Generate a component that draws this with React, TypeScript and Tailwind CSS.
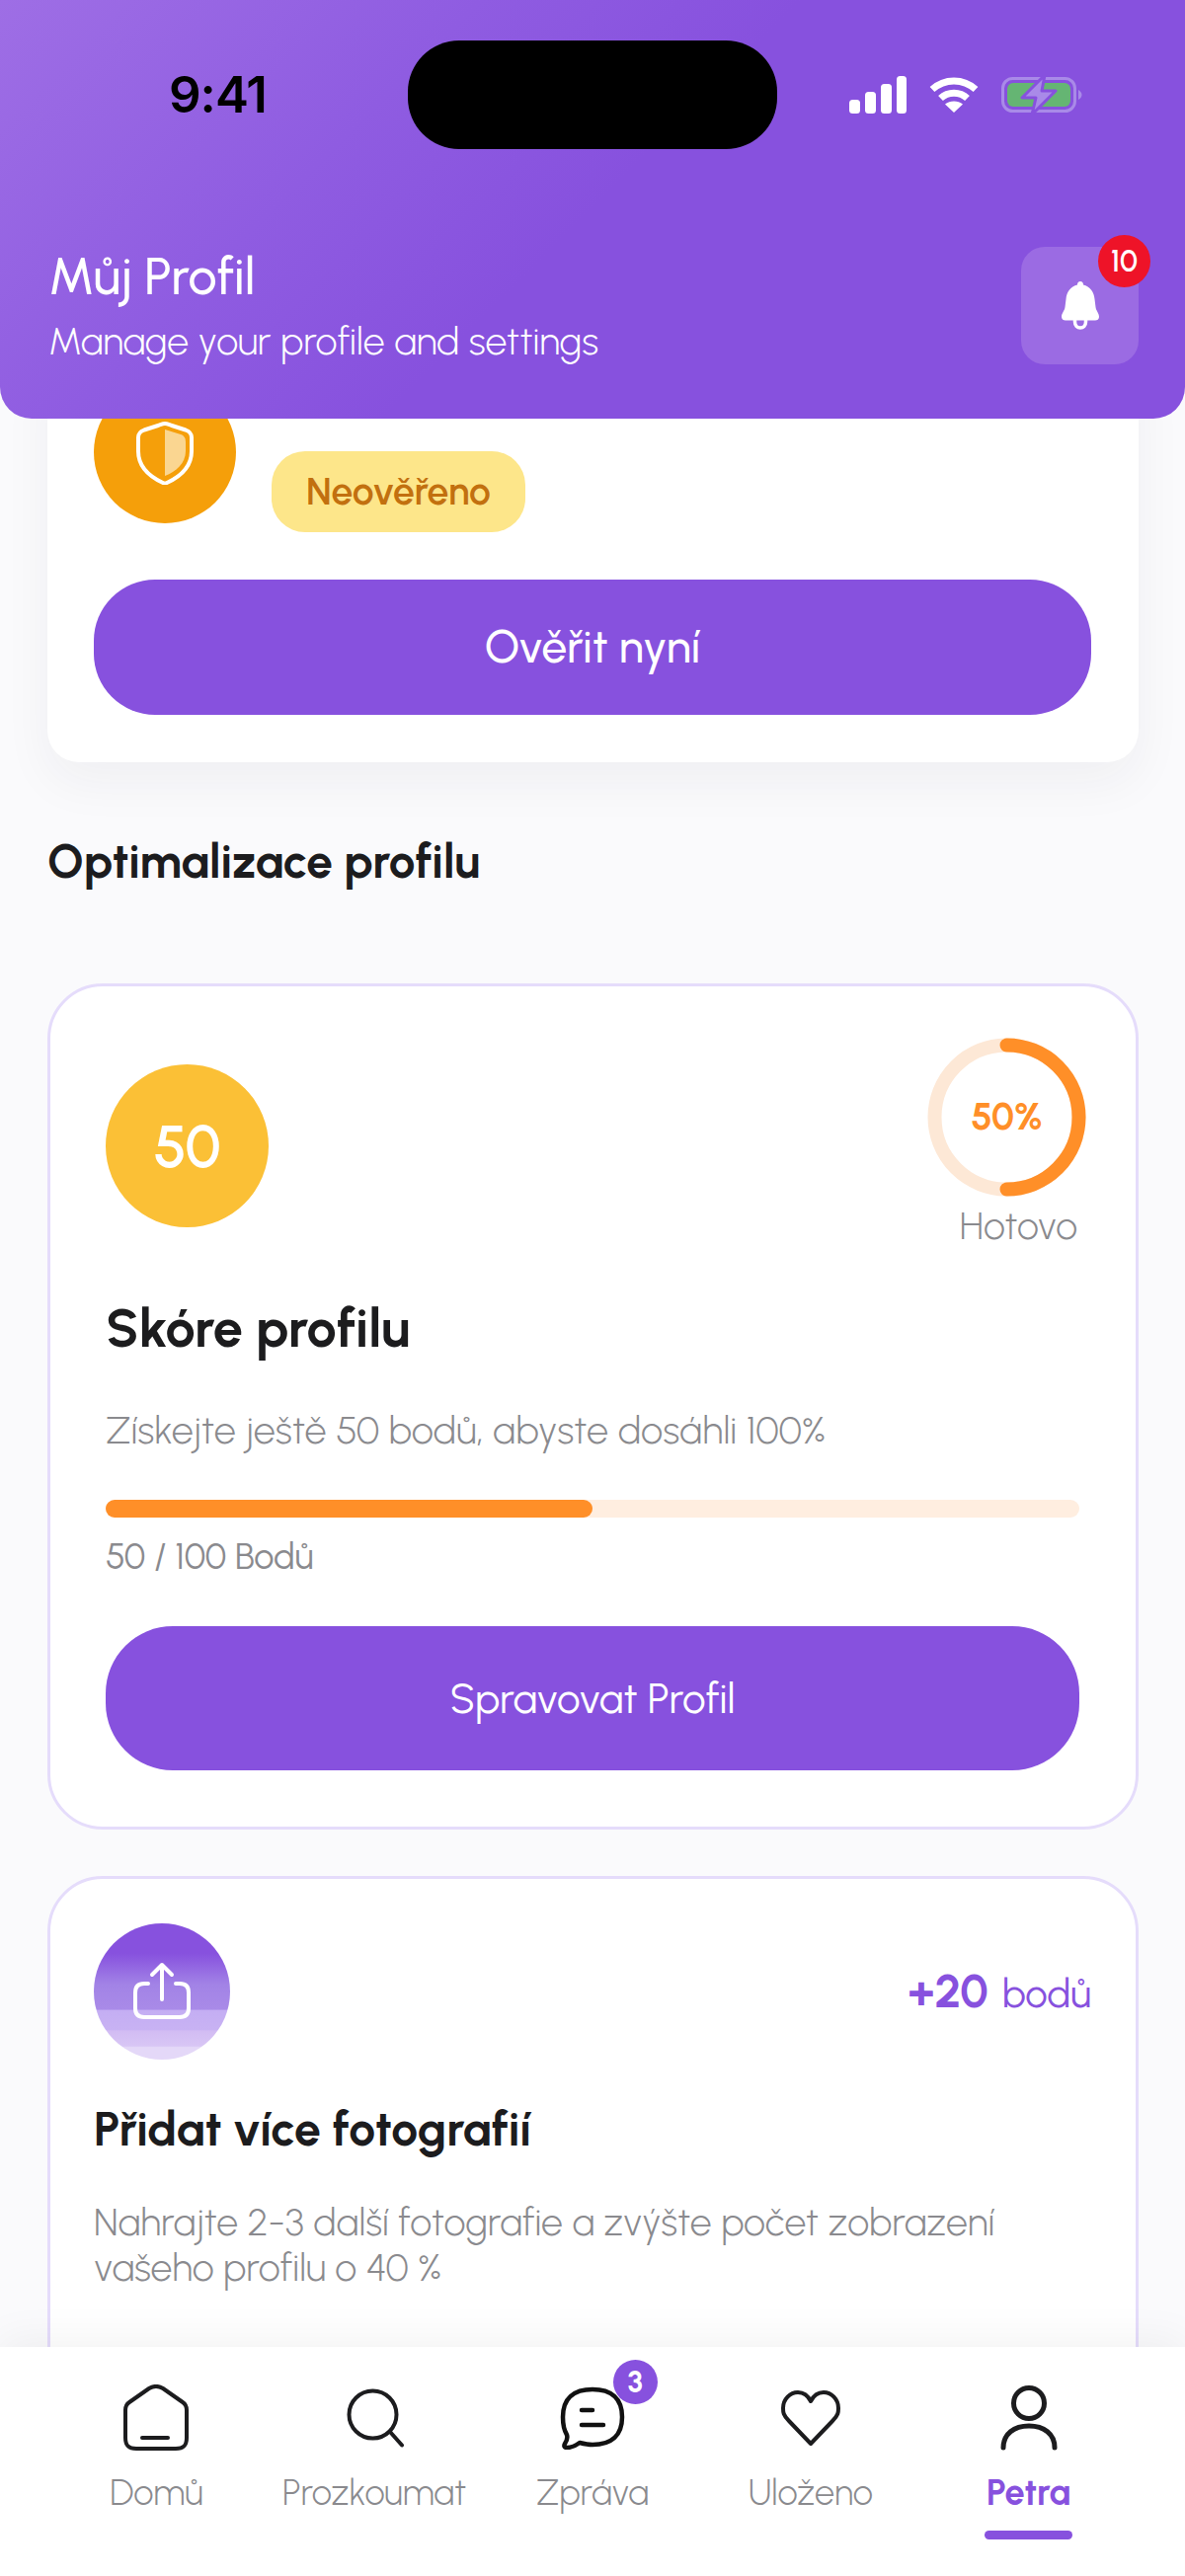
import React from "react";

function Signal() {
  return (
    <svg width="58" height="38" viewBox="0 0 58 38" fill="#fff">
      <rect x="0" y="24" width="11" height="14" rx="3.5" />
      <rect x="16" y="16" width="11" height="22" rx="3.5" />
      <rect x="32" y="8" width="11" height="30" rx="3.5" />
      <rect x="48" y="0" width="10" height="38" rx="3.5" />
    </svg>
  );
}
function Wifi() {
  return (
    <svg width="50" height="38" viewBox="0 0 50 38" fill="none">
      <path d="M3 13.5C15.5 2 34.5 2 47 13.5" stroke="#fff" strokeWidth="7" />
      <path d="M11.5 22.5C19 15.5 31 15.5 38.5 22.5" stroke="#fff" strokeWidth="7" />
      <path d="M25 37L16 28.5C21 24.5 29 24.5 34 28.5Z" fill="#fff" />
    </svg>
  );
}
function Battery() {
  return (
    <svg width="82" height="40" viewBox="0 0 82 40" fill="none">
      <rect x="1.5" y="3.5" width="73" height="33" rx="10" stroke="#a98ae8" strokeWidth="3" />
      <rect x="6" y="8" width="64" height="24" rx="6" fill="#65b573" />
      <path d="M78 15C80 16 81.500 18 81.500 20C81.500 22 80 24 78 25Z" fill="#a98ae8" />
      <path d="M44 0L21 23H35L31 40L55 16H41Z" fill="#a98ae8" stroke="#8751de" strokeWidth="3" strokeLinejoin="round" />
    </svg>
  );
}
function Bell() {
  return (
    <svg width="38" height="49" viewBox="0 0 38 49">
      <path d="M19 0C21 0 22 1.500 22 3.500C29 5 33 11 33.500 18L34.500 26C35 30 38 32 38 36C38 38.500 36 39.500 34 39.500H4C2 39.500 0 38.500 0 36C0 32 3 30 3.500 26L4.500 18C5 11 9 5 16 3.500C16 1.500 17 0 19 0Z" fill="#fff" />
      <path d="M13.500 38V41C13.500 45 16 47 19 47C22 47 24.500 45 24.500 41V38" fill="none" stroke="#fff" strokeWidth="3.500" />
    </svg>
  );
}
function Shield() {
  return (
    <svg width="58" height="64" viewBox="0 0 58 64" fill="none">
      <path d="M29 8L45 13C49 14.500 50 17 50 22V30C50 42 40 51 29 55Z" fill="#fad691" />
      <path d="M29 2C31 2 33 3 36 4L50 8.500C54 10 56 12 56 16V30C56 46 44 56 31 62Q29 63 27 62C14 56 2 46 2 30V16C2 12 4 10 8 8.500L22 4C25 3 27 2 29 2Z" stroke="#fff" strokeWidth="4" strokeLinejoin="round" />
    </svg>
  );
}
function Ring() {
  return (
    <svg width="161" height="161" viewBox="0 0 161 161" fill="none" className="block">
      <circle cx="80.500" cy="80.500" r="73" stroke="#fde8d6" strokeWidth="14" />
      <path d="M80.500 7.500A73 73 0 0 1 80.500 153.500" stroke="#ff8f28" strokeWidth="14" strokeLinecap="round" />
    </svg>
  );
}
function Upload() {
  return (
    <svg width="58" height="60" viewBox="0 0 58 60" fill="none" stroke="#fff" strokeWidth="4" strokeLinecap="round" strokeLinejoin="round">
      <path d="M29 38V3M19 13L29 3L39 13" />
      <path d="M15 22H11C5 22 2 25 2 31V47C2 53 5 56 11 56H47C53 56 56 53 56 47V31C56 25 53 22 47 22H43" />
    </svg>
  );
}
function HomeIcon() {
  return (
    <svg width="68" height="68" viewBox="0 0 68 68" fill="none" stroke="#1c1c1e" strokeWidth="4" strokeLinecap="round" strokeLinejoin="round">
      <path d="M3 26C3 22 4 20 7 18L27 4C32 1 36 1 41 4L61 18C64 20 65 22 65 26V54C65 62 62 65 54 65H14C6 65 3 62 3 54Z" />
      <path d="M20 54H46" />
    </svg>
  );
}
function SearchIcon() {
  return (
    <svg width="60" height="60" viewBox="0 0 60 60" fill="none" stroke="#1c1c1e" strokeWidth="4" strokeLinecap="round">
      <circle cx="28.500" cy="26.500" r="24" />
      <path d="M46 44L58 57.500" />
    </svg>
  );
}
function ChatIcon() {
  return (
    <svg width="66" height="64" viewBox="0 0 66 64" fill="none" stroke="#111" strokeWidth="4.500" strokeLinecap="round" strokeLinejoin="round">
      <path d="M33 3C52 3 63 12 63 31C63 50 52 59 33 59C28 59 24 58 20 57C16 60 12 62 7 62C4 62 4 60 5 58C7 55 8 52 7 49C4 44 3 38 3 31C3 12 14 3 33 3Z" />
      <path d="M22 24H33M22 39H44" />
    </svg>
  );
}
function HeartIcon() {
  return (
    <svg width="60" height="56" viewBox="0 0 60 56" fill="none" stroke="#1c1c1e" strokeWidth="4" strokeLinejoin="round">
      <path d="M30 54L8 31C2 25 2 22 2 18C2 9 9 2 17 2C22 2 27 5 30 11C33 5 38 2 43 2C51 2 58 9 58 18C58 22 58 25 52 31Z" />
    </svg>
  );
}
function UserIcon() {
  return (
    <svg width="58" height="68" viewBox="0 0 58 68" fill="none" stroke="#1c1c1e" strokeWidth="5" strokeLinecap="round">
      <circle cx="29" cy="19" r="15.500" />
      <path d="M3 64C3 50 14 42 29 42C44 42 55 50 55 64" />
    </svg>
  );
}

function NavItem({ label, active, icon, badge }: { label: string; active?: boolean; icon: React.ReactNode; badge?: string }) {
  return (
    <div className="relative flex flex-col items-center">
      <div className="flex h-[68px] items-center justify-center">{icon}</div>
      {badge && (
        <span className="absolute left-[131px] top-[-25px] flex h-[45px] w-[45px] items-center justify-center rounded-full bg-[#8751de] text-[30px] font-bold text-white">
          {badge}
        </span>
      )}
      <span className={`mt-[20px] text-[36px] leading-[44px] ${active ? "font-bold text-[#8751de]" : "font-light text-[#8a8a8e]"}`}>{label}</span>
      {active && <span className="mt-[16px] h-[9px] w-[89px] rounded-full bg-[#8751de]" />}
    </div>
  );
}

export default function App() {
  return (
    <div className="flex h-[2609px] w-[1200px] flex-col overflow-hidden bg-[#fafafc] font-['Urbanist','Lato',sans-serif]">
      <header className="relative z-10 h-[424px] shrink-0 rounded-b-[32px] bg-[linear-gradient(135deg,#9e6ee5_0%,#8f5ce1_30%,#8751de_50%)]">
        <div className="flex items-center pl-[171px] pt-[41px]">
          <span className="w-[242px] font-['Inter',sans-serif] text-[51px] font-semibold leading-[60px] tracking-[-1px] text-black">9:41</span>
          <div className="h-[110px] w-[374px] rounded-[52px] bg-black" />
          <div className="ml-[73px] flex items-center">
            <Signal />
            <span className="ml-[23px] flex"><Wifi /></span>
            <span className="ml-[23px] flex"><Battery /></span>
          </div>
        </div>
        <div className="mt-[99px] flex items-start justify-between pl-[49px] pr-[47px]">
          <div className="pt-[2px]">
            <h1 className="text-[52px] font-medium leading-[56px] text-white">Můj Profil</h1>
            <p className="mt-[15px] text-[39.200px] font-light leading-[46px] text-white">Manage your profile and settings</p>
          </div>
          <div className="relative flex h-[119px] w-[119px] items-center justify-center rounded-[24px] bg-[#9b6be3]">
            <Bell />
            <span className="absolute right-[-12px] top-[-12px] flex h-[53px] w-[53px] items-center justify-center rounded-full bg-[#ee1328] text-[30px] font-semibold text-white">10</span>
          </div>
        </div>
      </header>

      <main className="-mt-[60px] min-h-0 flex-1 overflow-hidden pl-[48px] pr-[47px]">
        <section className="rounded-b-[32px] bg-white pb-[48px] pl-[47px] pr-[48px] pt-[22px] shadow-[0_20px_50px_rgba(30,30,60,0.05)]">
          <div className="flex items-start gap-[36px]">
            <div className="flex h-[144px] w-[144px] items-center justify-center rounded-full bg-[#f59f0a] pt-[2px]"><Shield /></div>
            <span className="mt-[71px] flex h-[82px] w-[257px] items-center justify-center rounded-[34px] bg-[#fde68a] text-[39px] font-semibold text-[#c2700f]">Neověřeno</span>
          </div>
          <button className="mt-[48px] block h-[137px] w-full rounded-[62px] bg-[#8751de] text-[46px] font-medium text-white">Ověřit nyní</button>
        </section>

        <h2 className="mt-[73px] text-[47.600px] font-bold leading-[56px] text-[#1c1c1e]">Optimalizace profilu</h2>

        <section className="mt-[95px] rounded-[56px] border-[3px] border-[#e5dcfb] bg-white pb-[57px] pl-[56px] pr-[57px] pt-[52px]">
          <div className="flex items-start justify-between">
            <div className="mt-[27px] flex h-[165px] w-[165px] items-center justify-center rounded-full bg-[#fbc036] text-[60px] font-semibold text-white">50</div>
            <div className="-mr-[7px] flex flex-col items-end">
              <div className="relative">
                <Ring />
                <span className="absolute inset-0 flex items-center justify-center text-[38px] font-bold text-[#ff8f28]">50%</span>
              </div>
              <span className="mr-[9px] mt-[8px] text-[39px] font-light leading-[44px] text-[#8a8a8e]">Hotovo</span>
            </div>
          </div>
          <h3 className="mt-[51px] text-[54px] font-bold leading-[62px] text-[#1c1c1e]">Skóre profilu</h3>
          <p className="mt-[48px] text-[39.600px] font-light leading-[46px] text-[#8a8a8e]">Získejte ještě 50 bodů, abyste dosáhli 100%</p>
          <div className="mt-[48px] h-[18px] rounded-full bg-[#ffeee0]">
            <div className="h-[18px] w-1/2 rounded-full bg-[#ff8f28]" />
          </div>
          <p className="mt-[20px] text-[36px] font-normal leading-[40px] text-[#8a8a8e]">50 / 100 Bodů</p>
          <button className="mt-[50px] block h-[146px] w-full rounded-[68px] bg-[#8751de] text-[42px] font-normal text-white">Spravovat Profil</button>
        </section>

        <section className="mt-[47px] h-[700px] rounded-[56px] border-[3px] border-[#e5dcfb] bg-white pl-[44px] pr-[45px] pt-[45px]">
          <div className="flex items-center justify-between">
            <div className="flex h-[138px] w-[138px] items-center justify-center rounded-full bg-[linear-gradient(180deg,#8751de_0%,#8751de_22%,#a283e6_45%,#a98ae8_63%,#c4aef3_64%,#c8b2f3_78%,#d2bcf3_79%,#d8c6f5_90%,#e4d8f8_91%)]"><Upload /></div>
            <div className="flex items-baseline gap-[14px] text-[#8751de]">
              <span className="text-[47px] font-bold">+20</span>
              <span className="text-[40px] font-normal">bodů</span>
            </div>
          </div>
          <h3 className="mt-[43px] text-[48px] font-bold leading-[54px] text-[#1c1c1e]">Přidat více fotografií</h3>
          <p className="mt-[45px] text-[39.200px] font-light leading-[46px] text-[#8a8a8e]">Nahrajte 2-3 další fotografie a zvýšte počet zobrazení<br />vašeho profilu o 40 %</p>
        </section>
      </main>

      <nav className="relative z-10 grid h-[232px] shrink-0 grid-cols-5 bg-white px-[48px] pt-[38px] shadow-[0_-8px_40px_rgba(0,0,0,0.05)]">
        <NavItem label="Domů" icon={<HomeIcon />} />
        <NavItem label="Prozkoumat" icon={<SearchIcon />} />
        <NavItem label="Zpráva" icon={<ChatIcon />} badge="3" />
        <NavItem label="Uloženo" icon={<HeartIcon />} />
        <NavItem label="Petra" active icon={<UserIcon />} />
      </nav>
    </div>
  );
}
